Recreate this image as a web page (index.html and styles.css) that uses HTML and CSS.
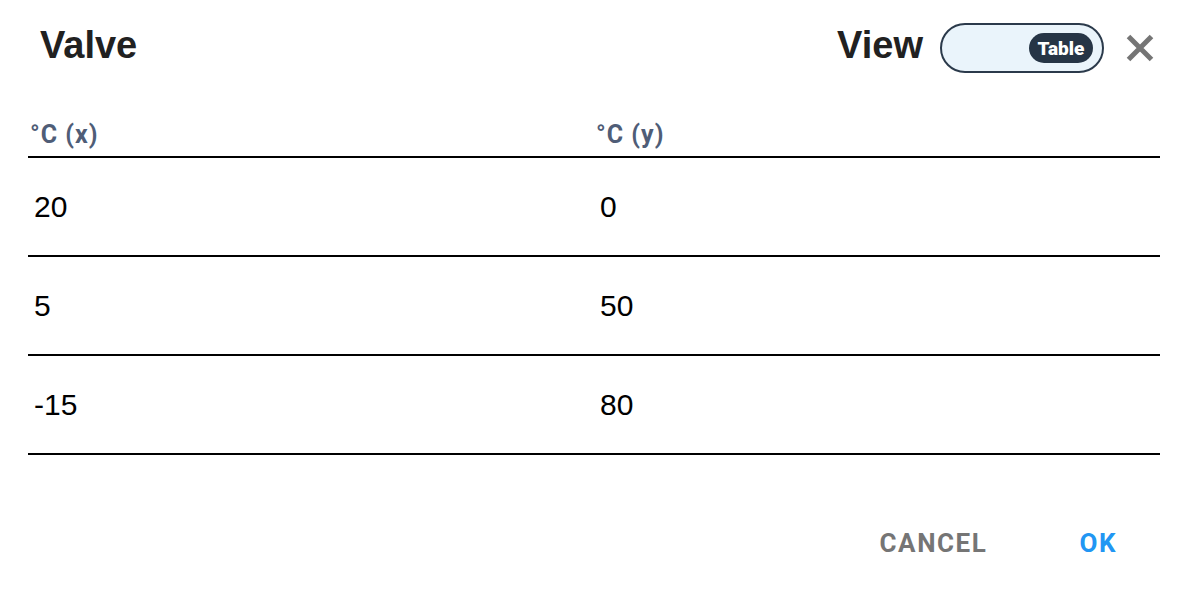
FILE: index.html
```html
<!DOCTYPE html>
<html lang="en">
<head>
    <meta charset="UTF-8">
    <meta name="viewport" content="width=device-width, initial-scale=1.0">
    <title>Valve</title>
    <link rel="stylesheet" href="styles.css">
</head>
<body>
    <div class="dialogo">
        <!-- Cabecera: titulo, selector de vista y cerrar -->
        <div class="cabecera">
            <h1 class="titulo">Valve</h1>
            <div class="vista">
                <span class="vista-label">View</span>
                <div class="toggle">
                    <span class="toggle-knob">Table</span>
                </div>
                <button class="cerrar" aria-label="Close">
                    <svg viewBox="0 0 30 30" width="30" height="30">
                        <path d="M3.5 3.5L26.5 26.5M26.5 3.5L3.5 26.5" stroke="currentColor" stroke-width="5" fill="none"/>
                    </svg>
                </button>
            </div>
        </div>

        <!-- Tabla de puntos -->
        <table class="tabla">
            <thead>
                <tr>
                    <th>°C (x)</th>
                    <th>°C (y)</th>
                </tr>
            </thead>
            <tbody>
                <tr><td>20</td><td>0</td></tr>
                <tr><td>5</td><td>50</td></tr>
                <tr><td>-15</td><td>80</td></tr>
            </tbody>
        </table>

        <div class="acciones">
            <button class="btn btn-cancelar">Cancel</button>
            <button class="btn btn-ok">OK</button>
        </div>
    </div>
</body>
</html>
```

FILE: styles.css
```css
body {
    margin: 0;
    background-color: #ffffff;
    font-family: 'Liberation Sans', Arial, sans-serif;
    color: #212121;
}

.dialogo {
    display: flex;
    flex-direction: column;
    padding: 23px 0 0 0;
}

.cabecera {
    display: flex;
    align-items: center;
    justify-content: space-between;
    height: 50px;
    padding: 0 33px 0 40px;
}

.titulo {
    margin: 0;
    padding-bottom: 6px;
    font-size: 38px;
    font-weight: bold;
    color: #212121;
}

.vista {
    display: flex;
    align-items: center;
}

.vista-label {
    font-size: 38px;
    font-weight: bold;
    padding-bottom: 6px;
    margin-right: 17px;
}

.toggle {
    display: flex;
    align-items: center;
    justify-content: flex-end;
    box-sizing: border-box;
    width: 164px;
    height: 50px;
    padding: 0 9px;
    border: 2px solid #2b3a4b;
    border-radius: 25px;
    background-color: #eaf4fb;
}

.toggle-knob {
    display: flex;
    align-items: center;
    justify-content: center;
    width: 64px;
    height: 30px;
    border-radius: 15px;
    background-color: #263546;
    color: #ffffff;
    font-family: 'Roboto', sans-serif;
    font-size: 19px;
    font-weight: 900;
}

.cerrar {
    display: flex;
    margin-left: 21px;
    padding: 0;
    border: none;
    background: none;
    color: #757575;
    cursor: pointer;
}

.tabla {
    width: 1132px;
    margin: 39px 28px 0 28px;
    border-collapse: collapse;
    table-layout: fixed;
}

.tabla th,
.tabla td {
    text-align: left;
    padding: 0 0 0 4px;
    border-bottom: 2px solid #000000;
}

.tabla th {
    height: 44px;
    font-family: 'Roboto', sans-serif;
    font-size: 25px;
    font-weight: bold;
    letter-spacing: 1px;
    color: #4f5d77;
    padding-left: 2px;
}

.tabla td {
    height: 97px;
    font-size: 30px;
    color: #000000;
    padding-left: 6px;
}

.acciones {
    display: flex;
    justify-content: flex-end;
    gap: 60px;
    margin-top: 64px;
    padding-right: 55px;
}

.btn {
    height: 48px;
    padding: 0 16px;
    border: none;
    background: none;
    font-family: 'Roboto', sans-serif;
    font-size: 26px;
    font-weight: bold;
    letter-spacing: 0.06em;
    text-transform: uppercase;
    cursor: pointer;
}

.btn-cancelar {
    color: #757575;
}

.btn-ok {
    color: #2196f3;
}
```
